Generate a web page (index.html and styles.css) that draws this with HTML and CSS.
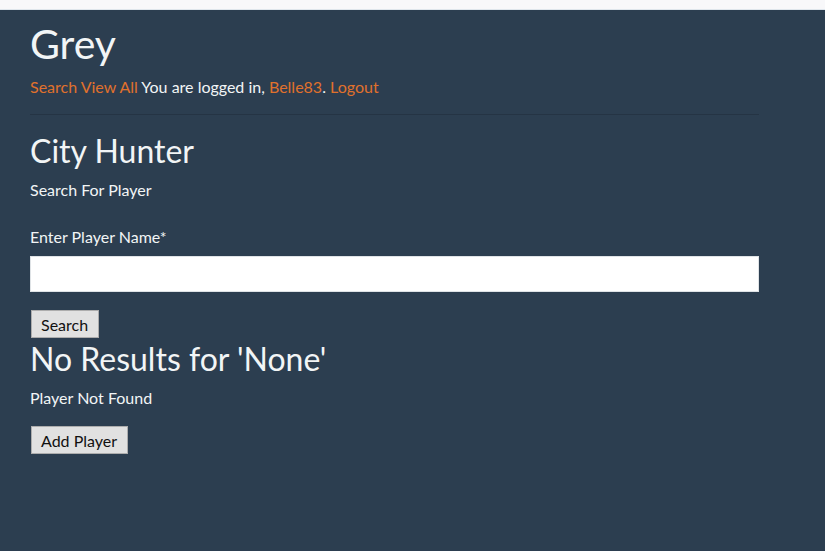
FILE: index.html
```html
<!DOCTYPE html>
<html>
<head>
<meta charset="utf-8">
<link rel="stylesheet" href="styles.css">
</head>
<body>
<div class="topbar"></div>
<div class="container">
  <h1 class="title">Grey</h1>
  <p class="nav"><a href="#">Search</a> <a href="#">View All</a> You are logged in, <a href="#">Belle83</a>. <a href="#">Logout</a></p>
  <hr class="rule">
  <h2 class="heading">City Hunter</h2>
  <p class="sub">Search For Player</p>
  <form class="search-form">
    <label class="label">Enter Player Name*</label>
    <input class="field" type="text">
    <button class="btn" type="button">Search</button>
  </form>
  <h2 class="heading results">No Results for 'None'</h2>
  <p class="sub">Player Not Found</p>
  <button class="btn add" type="button">Add Player</button>
</div>
</body>
</html>
```
FILE: styles.css
```css
html, body {
  margin: 0;
  padding: 0;
}
body {
  background: #2c3e50;
  color: #f2f5f6;
  font-family: Lato, "Open Sans", sans-serif;
  font-size: 16px;
  min-height: 551px;
}
.topbar {
  height: 9px;
  background: #f8f8fa;
  border-bottom: 1px solid #dfe6ec;
}
.container {
  width: 729px;
  padding: 0 30px;
}
.title {
  font-size: 41px;
  font-weight: 400;
  line-height: 43px;
  margin: 12px 0 0;
}
.nav {
  line-height: 21px;
  margin: 11px 0 0;
}
.nav a {
  color: #e0712c;
  text-decoration: none;
}
.rule {
  border: 0;
  border-top: 1px solid #253444;
  margin: 17px 0 0;
  height: 0;
}
.heading {
  font-size: 32px;
  font-weight: 400;
  line-height: 35px;
  margin: 18px 0 0;
}
.sub {
  line-height: 21px;
  margin: 11px 0 0;
}
.search-form {
  display: flex;
  flex-direction: column;
  align-items: flex-start;
  margin-top: 26px;
}
.label {
  line-height: 21px;
}
.field {
  box-sizing: border-box;
  width: 729px;
  height: 36px;
  margin: 9px 0 0;
  border: 1px solid #dfe3e6;
  background: #fff;
  outline: none;
}
.btn {
  font-family: Lato, "Open Sans", sans-serif;
  font-size: 16px;
  color: #111;
  background: #e1e1e1;
  border: 1px solid #adadad;
  height: 28px;
  padding: 1px 10px 0 9px;
  margin: 18px 0 0 1px;
  line-height: 26px;
}
.results {
  margin-top: 3px;
}
.add {
  margin-top: 18px;
  display: block;
}
```
